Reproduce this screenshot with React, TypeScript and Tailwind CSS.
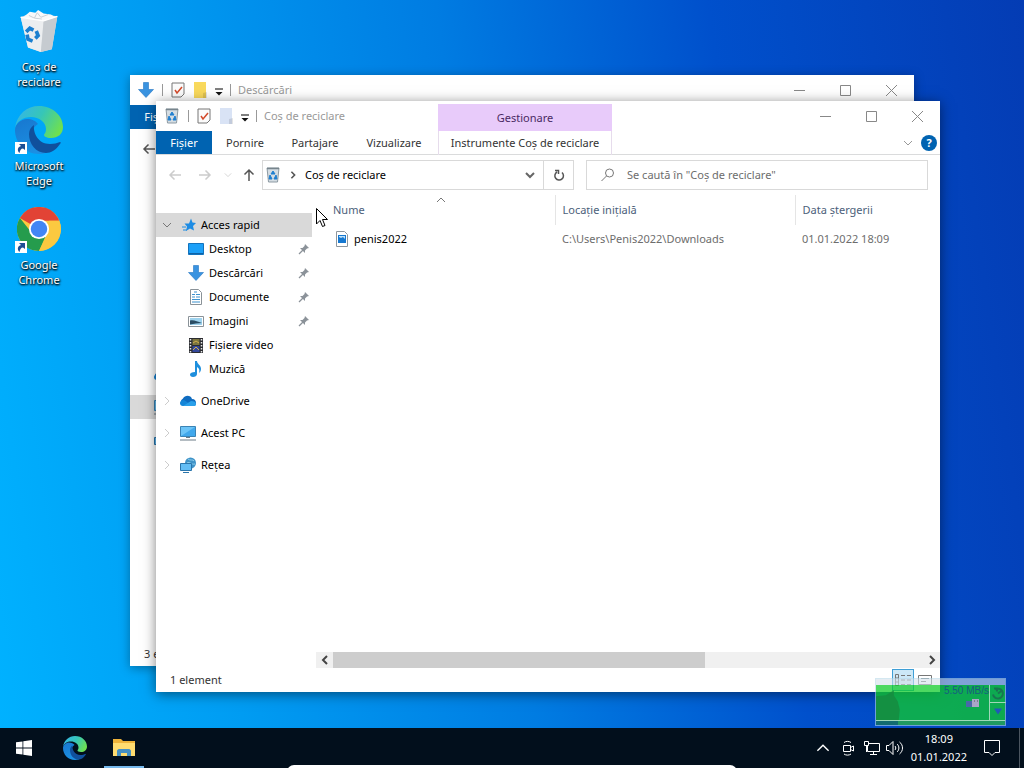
import React from "react";
import type { ReactNode } from "react";

interface IconProps {
    className?: string
}

const BinIcon = ({ className }: IconProps) => (
    <svg viewBox="0 0 16 16" className={className} aria-hidden="true">
        <path d="M2 1h12l-1.5 14h-9z" fill="#d5dde3" stroke="#8d9aa3" />
        <path d="M2 1.5h12" stroke="#77848c" strokeWidth="1.5" />
        <path d="M8 4l2 3H6zM5 8l2 4H4zM11 8l1 4H9z" fill="#1f7fd0" stroke="#1f7fd0" />
    </svg>
);

const DesktopBin = () => (
    <svg viewBox="0 0 48 48" className="h-11 w-11" aria-hidden="true">
        <path d="M4 9l12-5 12 2 16 2-6 36-12 3-14-5z" fill="#dfe3e7" />
        <path d="M4 9l25 4-3 34-14-5z" fill="#eceef0" />
        <path d="M29 13l15-5-6 36-12 3z" fill="#c6cbd0" />
        <path d="M7 9l7-6 6 1 3-3 6 4 8 1 5 3-13 4z" fill="#f8f9fa" />
        <path d="M13 7l6 3 3-6 4 5 8-3M19 10l8 1" fill="none" stroke="#c5ccd2" />
        <path d="M4 9l25 4 15-5" fill="none" stroke="#fff" strokeWidth="1.5" />
        <path d="M10 25l4-4 4 2M21 24l2 5-3 3M17 35l-5-2-1-5" fill="none" stroke="#1b7fcf" strokeWidth="4" />
    </svg>
);

const EdgeIcon = ({ className }: IconProps) => (
    <svg viewBox="0 0 48 48" className={className} aria-hidden="true">
        <defs>
            <linearGradient id="edgeTop" x1="0" y1="0.2" x2="1" y2="0.6">
                <stop offset="0" stopColor="#35b5e8" />
                <stop offset="0.5" stopColor="#36c6b8" />
                <stop offset="1" stopColor="#6fe04f" />
            </linearGradient>
            <linearGradient id="edgeLeft" x1="0" y1="0" x2="0.4" y2="1">
                <stop offset="0" stopColor="#1877cf" />
                <stop offset="1" stopColor="#1b8fe2" />
            </linearGradient>
        </defs>
        <path d="M0 24C0 37 10 48 24 48c5 0 10-2 13-4-12 1-20-6-20-16 0-5 3-8 6-10-2-3-6-5-11-5C6 13 0 18 0 24z" fill="url(#edgeLeft)" />
        <path d="M0 22C2 8 12 0 24 0c14 0 24 10 24 21 0 7-5 11-12 11-5 0-7-2-7-3 0-1 2-2 2-6 0-7-7-12-15-12C8 11 2 15 0 22z" fill="url(#edgeTop)" />
        <path d="M14 28c0-4 2-7 5-9-1 8 4 19 16 19 4 0 7-1 10-2 1 0 1 1 0 2-4 6-9 9-14 9-10 0-17-9-17-19z" fill="#10509c" />
    </svg>
);

const ChromeIcon = () => (
    <svg viewBox="0 0 48 48" className="h-11 w-11" aria-hidden="true">
        <circle cx="24" cy="24" r="24" fill="#fbc940" />
        <path d="M24 24L3.2 12A24 24 0 0 1 44.8 12L46 15H24z" fill="#e24335" />
        <path d="M3.2 12A24 24 0 0 0 24 48l9-18-9-6-8 4z" fill="#259c4d" />
        <path d="M24 48l8-18 3-15h11A24 24 0 0 1 24 48z" fill="#fbc940" />
        <circle cx="24" cy="24" r="11" fill="#fff" />
        <circle cx="24" cy="24" r="9" fill="#4286f5" />
    </svg>
);

const ShortcutArrow = () => (
    <svg viewBox="0 0 12 12" className="absolute bottom-0 left-0 h-3 w-3 bg-white" aria-hidden="true">
        <path d="M4 2h6v6L8 6.500c-2 0-3 2-3.500 4.500C1.500 8 3 5 6 4z" fill="#1d4e94" />
    </svg>
);

const CheckDoc = () => (
    <svg viewBox="0 0 14 16" className="h-4 w-3.5" aria-hidden="true">
        <path d="M1 1h12v11l-3 3H1z" fill="#fbfbfb" stroke="#777" />
        <path d="M4 8l2 3 5-6" fill="none" stroke="#d2492a" strokeWidth="1.5" />
    </svg>
);

const FolderPage = ({ className }: IconProps) => (
    <svg viewBox="0 0 14 16" className={className} aria-hidden="true">
        <path d="M1 0h12v16H1z" fill="currentColor" />
        <path d="M10 11l4-1v6h-4z" fill="#000" fillOpacity="0.1" />
    </svg>
);

const QuickMenu = () => (
    <svg viewBox="0 0 8 8" className="h-2 w-2" aria-hidden="true">
        <path d="M0 1h8" stroke="#000" />
        <path d="M0.500 4h7L4 7.500z" fill="#111" />
    </svg>
);

const DownArrow = () => (
    <svg viewBox="0 0 16 16" className="h-4 w-4" aria-hidden="true">
        <path d="M5.500 0.500h5v7h5L8 15.500 0.500 7.500h5z" fill="#3a93e0" stroke="#2376c2" strokeWidth="0.6" />
    </svg>
);

const StarIcon = () => (
    <svg viewBox="0 0 16 16" className="h-4 w-4" aria-hidden="true">
        <path d="M9 1.500l1.500 4L14 6l-3 3 1 4.500-4-2L4 14l1-4.500-2.500-3h4.500z" fill="#1d8ce4" />
        <path d="M0 10h4M1 13h4" stroke="#1d8ce4" />
    </svg>
);

const DesktopIcon = () => (
    <svg viewBox="0 0 16 16" className="h-4 w-4" aria-hidden="true">
        <path d="M0.500 2.500h15v11H0.500z" fill="#1ca0f8" stroke="#1373bd" />
        <path d="M1 12.500h14" stroke="#0e62a6" />
    </svg>
);

const DocumentIcon = () => (
    <svg viewBox="0 0 16 16" className="h-4 w-4" aria-hidden="true">
        <path d="M2.500 0.500h8l3 3v12h-11z" fill="#fff" stroke="#8a9298" />
        <path d="M4 5.500h3M4 8h3M4 10.500h8M4 13h8M8 5.500h4M8 8h4M6 3h3" stroke="#3d92cf" />
    </svg>
);

const PicturesIcon = () => (
    <svg viewBox="0 0 16 16" className="h-4 w-4" aria-hidden="true">
        <path d="M0.500 3.500h15v10H0.500z" fill="#fff" stroke="#8a9298" />
        <path d="M2 5h12v7H2z" fill="#9fd3ee" />
        <path d="M2 7.500c4-1 7 1 12 2.500l-6 0.500-6 1z" fill="#2a4c63" />
    </svg>
);

const VideoIcon = () => (
    <svg viewBox="0 0 16 16" className="h-4 w-4" aria-hidden="true">
        <path d="M1 1h14v15H1z" fill="#2b2c30" />
        <path d="M4.500 2h7v6h-7z" fill="#7a7440" />
        <path d="M4.500 9h7v6h-7z" fill="#34489c" />
        <path d="M5 6l3-2 3 2M5 13l3-3 3 3" fill="none" stroke="#d2b14a" />
        <path d="M2.500 2v14M13.500 2v14" stroke="#e8e8e8" strokeWidth="1.500" strokeDasharray="1.500 1.500" />
    </svg>
);

const MusicIcon = () => (
    <svg viewBox="0 0 16 16" className="h-4 w-4" aria-hidden="true">
        <path d="M7 0h2c0 3 4 4 4 8 0 2-1 3-2 4 1-3 0-5-2-6v7c0 2-2 3-4 3s-3-1-3-2.500S4 11 7 11z" fill="#1e8fdd" />
    </svg>
);

const CloudIcon = () => (
    <svg viewBox="0 0 16 12" className="h-3 w-4" aria-hidden="true">
        <path d="M4 11a4 4 0 0 1-1-7.500C5-0.500 11 0 12 4c3 0 4 2 4 4s-1 3-3 3z" fill="#0f6cc0" />
        <path d="M3 11c-2 0-3-1-3-3s2-3 4-3l9 6z" fill="#1485d8" />
        <path d="M3 11l8-5c3 0 5 1 5 3s-1 2-3 2z" fill="#2aa0ea" />
    </svg>
);

const PcIcon = () => (
    <svg viewBox="0 0 16 16" className="h-4 w-4" aria-hidden="true">
        <path d="M0.500 1.500h15v10H0.500z" fill="#6cc4f7" stroke="#3b83b4" />
        <path d="M1 11L15 2v9z" fill="#41a8ec" />
        <path d="M6 12.500h4M0 15h16" stroke="#6a7a86" />
    </svg>
);

const NetworkIcon = () => (
    <svg viewBox="0 0 16 16" className="h-4 w-4" aria-hidden="true">
        <circle cx="10.500" cy="6" r="5.500" fill="#3f93c8" />
        <path d="M8 2c2 2 5 0 6 2M7 6c3-2 4 2 8 1" fill="none" stroke="#8fd0ee" />
        <path d="M0.500 6.500h11v7h-11z" fill="#62bdf5" stroke="#2a75ab" />
        <path d="M3 15.500h6" stroke="#2a75ab" />
    </svg>
);

const PinIcon = () => (
    <svg viewBox="0 0 12 12" className="h-3 w-3" aria-hidden="true">
        <path d="M7 1l4 4-2 0.500-2 2 0 2.500L2 5l2.500 0 2-2z" fill="#8b9299" />
        <path d="M5 7l-4 4" stroke="#8b9299" strokeWidth="1.200" />
    </svg>
);

const ImageFile = () => (
    <svg viewBox="0 0 12 16" className="h-4 w-3" aria-hidden="true">
        <path d="M0.500 0.500h8l3 3v12H0.500z" fill="#fff" stroke="#8e979e" />
        <path d="M2 4h8v8H2z" fill="#1678d0" />
        <path d="M3 6l2 1 2-1 2 2v-3H3z" fill="#bfe2fa" />
    </svg>
);

interface ChevronProps {
    dir: "left" | "right" | "up" | "down",
    className?: string
}

const chevrons = {
    left: "M7 1L3 5l4 4",
    right: "M3 1l4 4-4 4",
    up: "M1 7l4-4 4 4",
    down: "M1 3l4 4 4-4",
};

const Chevron = ({ dir, className }: ChevronProps) => (
    <svg viewBox="0 0 10 10" className={className} fill="none" stroke="currentColor" aria-hidden="true">
        <path d={chevrons[dir]} />
    </svg>
);

interface ArrowProps {
    d: string,
    className: string
}

const NavArrow = ({ d, className }: ArrowProps) => (
    <svg viewBox="0 0 14 14" className={className} fill="none" stroke="currentColor" strokeWidth="1.500" aria-hidden="true">
        <path d={d} />
    </svg>
);

const arrowLeft = "M13 7H2M6.500 2.500L2 7l4.500 4.500";
const arrowRight = "M1 7h11M7.500 2.500L12 7l-4.500 4.500";
const arrowUp = "M7 13V2M2.500 6.500L7 2l4.500 4.500";

const CaptionButtons = () => {
    const shapes = [
        { label: "Minimizare", d: "M0 5.500h11" },
        { label: "Maximizare", d: "M0.500 0.500h10v10h-10z" },
        { label: "Închidere", d: "M0 0l11 11M11 0L0 11" },
    ];
    return <div className="ml-auto flex">
        {shapes.map((shape) => (
            <button key={shape.label} aria-label={shape.label} className="flex h-7 w-[46px] items-center justify-center">
                <svg viewBox="0 0 11 11" className="h-[11px] w-[11px]" fill="none" stroke="#888"><path d={shape.d} /></svg>
            </button>
        ))}
    </div>
};

interface TitleBarProps {
    icon: ReactNode,
    title: string,
    folderColor: string
}

const TitleBar = ({ icon, title, folderColor }: TitleBarProps) => (
    <div className="flex h-[30px] items-center">
        <div className="flex items-center pl-2">
            {icon}
            <span className="mx-2 h-3 w-px bg-[#999]" />
            <button aria-label="Proprietăți"><CheckDoc /></button>
            <button aria-label="Folder nou" className="ml-2"><FolderPage className={`h-4 w-3.5 ${folderColor}`} /></button>
            <button aria-label="Personalizare" className="ml-2 pt-1"><QuickMenu /></button>
            <span className="mx-[7px] h-3 w-px bg-[#999]" />
            <span className="text-[#999]">{title}</span>
        </div>
        <CaptionButtons />
    </div>
);

const DownloadsWindow = () => (
    <section className="absolute top-[75px] right-[110px] bottom-[102px] left-[130px] flex flex-col bg-white shadow-[0_2px_10px_rgba(0,0,0,0.35)]">
        <TitleBar icon={<DownArrow />} title="Descărcări" folderColor="text-[#f9d95c]" />
        <div className="flex h-6">
            <button className="w-14 bg-[#0063b1] text-white">Fișier</button>
        </div>
        <div className="flex h-10 items-center px-3 text-[#555]">
            <NavArrow d={arrowLeft} className="h-3.5 w-3.5" />
        </div>
        <div className="flex-1 pt-[194px] text-[#3c6f98]">
            <div className="flex h-6 items-center pl-6"><CloudIcon /></div>
            <div className="mt-2 flex h-6 items-center bg-[#d9d9d9] pl-6"><PcIcon /></div>
            <div className="mt-2 flex h-6 items-center pl-6"><NetworkIcon /></div>
        </div>
        <div className="flex h-6 items-center px-3.5 text-[#333]">3 elemente</div>
    </section>
);

const quickItems = [
    { name: "Desktop", icon: <DesktopIcon />, pinned: true },
    { name: "Descărcări", icon: <DownArrow />, pinned: true },
    { name: "Documente", icon: <DocumentIcon />, pinned: true },
    { name: "Imagini", icon: <PicturesIcon />, pinned: true },
    { name: "Fișiere video", icon: <VideoIcon />, pinned: false },
    { name: "Muzică", icon: <MusicIcon />, pinned: false },
];

const rootItems = [
    { name: "OneDrive", icon: <CloudIcon /> },
    { name: "Acest PC", icon: <PcIcon /> },
    { name: "Rețea", icon: <NetworkIcon /> },
];

const Sidebar = () => (
    <nav className="w-[156px] shrink-0 pt-[18px]">
        <div className="flex h-6 items-center bg-[#d9d9d9] pl-1.5">
            <Chevron dir="down" className="h-2.5 w-2.5 text-[#777]" />
            <span className="ml-2.5"><StarIcon /></span>
            <span className="ml-[3px]">Acces rapid</span>
        </div>
        <ul>
            {quickItems.map((item) => (
                <li key={item.name} className="flex h-6 items-center pr-0.5 pl-8">
                    {item.icon}
                    <span className="ml-[5px]">{item.name}</span>
                    {item.pinned && <span className="ml-auto"><PinIcon /></span>}
                </li>
            ))}
        </ul>
        <ul className="mt-2 flex flex-col gap-2">
            {rootItems.map((item) => (
                <li key={item.name} className="flex h-6 items-center pl-1.5">
                    <Chevron dir="right" className="h-2.5 w-2.5 text-[#ccc]" />
                    <span className="ml-2">{item.icon}</span>
                    <span className="ml-[5px]">{item.name}</span>
                </li>
            ))}
        </ul>
    </nav>
);

const FileTable = () => (
    <table className="w-full table-fixed text-left">
        <thead className="text-[#4c607a]">
            <tr className="h-[30px]">
                <th className="relative w-[231px] border-r border-[#e5e5e5] pl-[9px] font-normal">
                    Nume
                    <Chevron dir="up" className="absolute top-0 left-[112px] h-2.5 w-2.5 text-[#777]" />
                </th>
                <th className="w-60 border-r border-[#e5e5e5] pl-[7px] font-normal">Locație inițială</th>
                <th className="pl-[7px] font-normal">Data ștergerii</th>
            </tr>
        </thead>
        <tbody className="text-[#6d6d6d]">
            <tr className="h-7">
                <td className="pl-3 text-black"><span className="flex items-center gap-1.5"><ImageFile />penis2022</span></td>
                <td className="pl-[7px]">C:\Users\Penis2022\Downloads</td>
                <td className="pl-[7px]">01.01.2022 18:09</td>
            </tr>
        </tbody>
    </table>
);

const RecycleWindow = () => (
    <section className="absolute top-[101px] right-[84px] bottom-[76px] left-[156px] flex flex-col bg-white shadow-[0_2px_12px_rgba(0,0,0,0.5)]">
        <div className="relative">
            <TitleBar icon={<BinIcon className="h-4 w-4" />} title="Coș de reciclare" folderColor="text-[#d9e3f5]" />
            <div className="flex h-6 items-stretch border-b border-[#dadbdc] text-[#333]">
                <button className="w-14 bg-[#0063b1] text-white">Fișier</button>
                <button className="w-[66px]">Pornire</button>
                <button className="w-[74px]">Partajare</button>
                <button className="w-[84px]">Vizualizare</button>
                <span className="ml-auto flex items-center gap-2 pr-[3px]">
                    <button aria-label="Extindere panglică"><Chevron dir="down" className="h-2.5 w-2.5 text-[#999]" /></button>
                    <button aria-label="Ajutor" className="flex h-4 w-4 items-center justify-center rounded-full bg-[#0063b1] font-bold text-white">?</button>
                </span>
            </div>
            <div className="absolute top-[3px] left-[282px] w-[174px] text-center">
                <div className="h-[27px] bg-[#e8cbfa] pt-1.5 text-[#4a2a63]">Gestionare</div>
                <button className="block h-6 w-full border-x border-[#e6dcec] text-[#333]">Instrumente Coș de reciclare</button>
            </div>
        </div>
        <div className="flex h-10 items-center pr-3">
            <div className="flex w-[106px] items-center pl-3 text-[#ccc]">
                <button aria-label="Înapoi"><NavArrow d={arrowLeft} className="h-3.5 w-3.5" /></button>
                <button aria-label="Înainte" className="ml-4"><NavArrow d={arrowRight} className="h-3.5 w-3.5" /></button>
                <button aria-label="Locații recente" className="ml-3"><Chevron dir="down" className="h-2 w-2" /></button>
                <button aria-label="Sus" className="ml-2.5 text-[#555]"><NavArrow d={arrowUp} className="h-3.5 w-3.5" /></button>
            </div>
            <div className="flex h-[30px] min-w-0 flex-[310] border border-[#d9d9d9]">
                <div className="flex flex-1 items-center pr-2 pl-0.5">
                    <BinIcon className="h-4 w-4" />
                    <Chevron dir="right" className="mx-2 h-2 w-2 stroke-2 text-[#555]" />
                    <span>Coș de reciclare</span>
                    <button aria-label="Locații anterioare" className="ml-auto"><Chevron dir="down" className="h-2.5 w-2.5 stroke-2 text-[#666]" /></button>
                </div>
                <button aria-label="Reîmprospătare" className="flex w-[30px] items-center justify-center border-l border-[#d9d9d9]">
                    <svg viewBox="0 0 12 12" className="h-3 w-3" fill="none" stroke="#555" strokeWidth="1.500"><path d="M9 3.500a4.300 4.300 0 1 1-5-0.500M2 1.500h3.500V5" /></svg>
                </button>
            </div>
            <label className="ml-3 flex h-[30px] min-w-0 flex-[326] items-center border border-[#d9d9d9] pl-3.5">
                <svg viewBox="0 0 14 14" className="h-3.5 w-3.5" fill="none" stroke="#777" aria-hidden="true"><circle cx="8.500" cy="5" r="4" /><path d="M5.500 8L0.500 13" /></svg>
                <input type="text" aria-label="Căutare" placeholder={'Se caută în "Coș de reciclare"'} className="ml-3 min-w-0 flex-1 outline-none placeholder:text-[#6d6d6d]" />
            </label>
        </div>
        <div className="flex min-h-0 flex-1">
            <Sidebar />
            <div className="flex min-w-0 flex-1 flex-col pl-1">
                <div className="flex-1 pl-2"><FileTable /></div>
                <div className="flex h-4 items-center bg-[#f0f0f0] text-[#444]">
                    <button aria-label="Derulare la stânga" className="flex w-[17px] justify-center"><Chevron dir="left" className="h-2.5 w-2.5 stroke-2" /></button>
                    <div className="h-full flex-1"><div className="h-full w-[63%] bg-[#cdcdcd]" /></div>
                    <button aria-label="Derulare la dreapta" className="flex w-[17px] justify-center"><Chevron dir="right" className="h-2.5 w-2.5 stroke-2" /></button>
                </div>
            </div>
        </div>
        <div className="flex h-6 items-center pr-1 pl-3.5 text-[#333]">
            1 element
            <button aria-label="Detalii" className="ml-auto flex h-[22px] w-[22px] items-center justify-center border border-[#3f9fd6] bg-[#cce8f7]">
                <svg viewBox="0 0 16 12" className="h-3 w-4" stroke="#777" fill="none"><path d="M0.500 0.500h3v11h-3zM0 4h4M0 8h4M6 1.500h4M12 1.500h4M6 6h4M12 6h4M6 10.500h4M12 10.500h4" /></svg>
            </button>
            <button aria-label="Miniaturi" className="flex h-[22px] w-[22px] items-center justify-center">
                <svg viewBox="0 0 14 10" className="h-2.5 w-3.5" stroke="#777" fill="none"><path d="M0.500 0.500h13v9H0.500zM3 3.500h8M3 6.500h5" /></svg>
            </button>
        </div>
    </section>
);

interface ShortcutProps {
    name: string,
    linked?: boolean,
    children: ReactNode
}

const DesktopShortcut = ({ name, linked, children }: ShortcutProps) => (
    <button className="flex w-[78px] flex-col items-center">
        <span className="relative flex h-12 w-12 items-center justify-center">
            {children}
            {linked && <ShortcutArrow />}
        </span>
        <span className="mt-1 w-16 leading-[15px] text-white [text-shadow:0_1px_2px_#000,1px_1px_2px_#000]">{name}</span>
    </button>
);

const TransferMeter = () => (
    <div className="absolute right-[18px] bottom-[42px] flex h-12 w-[131px] flex-col border border-[#b7d8e8]/60">
        <div className="h-1.5 bg-[#d3dfea]/60" />
        <div className="flex flex-1 bg-[#12cc2c]/75">
            <svg viewBox="0 0 114 34" className="h-full flex-1" preserveAspectRatio="none" aria-hidden="true">
                <path d="M0 11L10 10 18 5v5l4 6 2 8-1 10H0z" fill="#168a3e" fillOpacity="0.8" />
            </svg>
            <span className="absolute top-1 right-4 font-['Liberation_Sans',sans-serif] text-[10px] text-[#175c80]">5.50 MB/s</span>
            <svg viewBox="0 0 16 12" className="absolute top-[18px] right-6 h-3 w-4" aria-hidden="true">
                <path d="M1 4h7v6H1z" fill="#4968a8" /><path d="M7 2h7v8H7z" fill="#a9a6c8" /><path d="M9 4h1M12 4h1" stroke="#555" />
            </svg>
            <div className="flex w-4 flex-col divide-y divide-[#9fd7b8] border-l border-[#9fd7b8]">
                <svg viewBox="0 0 16 16" className="min-h-0 w-4 flex-1" fill="none" stroke="#187650" strokeWidth="2" aria-hidden="true"><path d="M3 9a5 5 0 1 0 2-5M8 8l4-3M4 3h3v3" /></svg>
                <svg viewBox="0 0 16 16" className="min-h-0 w-4 flex-1" aria-hidden="true"><path d="M4 5h8l-4 6z" fill="#2158b8" /></svg>
            </div>
        </div>
        <div className="flex h-[5px] border-t border-[#9fd7b8] bg-[#209a60]"><div className="w-[17%] bg-[#126b70]" /></div>
    </div>
);

const Taskbar = () => (
    <footer className="absolute inset-x-0 bottom-0 flex h-10 overflow-hidden bg-[#020f1c] text-white">
        <button aria-label="Start" className="flex w-12 items-center justify-center">
            <svg viewBox="0 0 16 16" className="h-4 w-4" fill="#fff"><path d="M0 2.300L6.500 1.400v6.200H0zM7.300 1.300L16 0v7.600H7.300zM0 8.400h6.500v6.200L0 13.700zM7.300 8.400H16V16l-8.700-1.300z" /></svg>
        </button>
        <button aria-label="Microsoft Edge" className="ml-[3px] flex w-12 items-center justify-center"><EdgeIcon className="h-6 w-6" /></button>
        <button aria-label="Explorer" className="ml-[5px] flex w-10 items-center justify-center border-b-2 border-[#76b9ed]">
            <svg viewBox="0 0 22 20" className="mt-0.5 h-5 w-[22px]">
                <path d="M0 1h8l2 2h12v15H0z" fill="#eeb33a" />
                <path d="M0 5h22v13H0z" fill="#ffdc70" />
                <path d="M4 18v-5c0-1 1-2 2-2h10c1 0 2 1 2 2v5h-4v-3H8v3z" fill="#4590c4" />
            </svg>
        </button>
        <div className="ml-auto flex items-center">
            <button aria-label="Pictograme ascunse"><Chevron dir="up" className="h-3.5 w-3.5" /></button>
            <svg viewBox="0 0 16 16" className="ml-2.5 h-4 w-4" fill="none" stroke="#fff" aria-hidden="true">
                <path d="M3.500 5.500h7v6h-7zM10.500 7.500l3-1.500v5l-3-1.500M4 2.500c2-1.500 5-1.500 7 0M4 14c2 1.500 5 1.500 7 0" />
            </svg>
            <svg viewBox="0 0 16 16" className="ml-2 h-4 w-4" fill="none" stroke="#fff" aria-hidden="true">
                <path d="M5 3.500h10.500v8H3.500V6M9.500 12v2.500M6 14.500h7M0.500 1.500h4v4h-4zM2.500 6v6" />
            </svg>
            <svg viewBox="0 0 17 16" className="ml-1.5 h-4 w-[17px]" fill="none" stroke="#fff" aria-hidden="true">
                <path d="M0.500 5.500h2.500l4-4v13l-4-4H0.500zM9 6c1 1 1 3 0 4M11 4c2.500 2 2.500 6 0 8M13.500 2c4 3 4 9 0 12" />
            </svg>
            <div className="ml-2 text-center leading-[18px]">
                <div>18:09</div>
                <div>01.01.2022</div>
            </div>
            <button aria-label="Notificări" className="mr-[18px] ml-4">
                <svg viewBox="0 0 18 18" className="h-[18px] w-[18px]" fill="none" stroke="#fff"><path d="M1.500 1.500h15v12H12l-3 3-3-3H1.500z" /></svg>
            </button>
            <span className="mr-1 h-full w-px bg-[#4b5560]" />
        </div>
        <div className="absolute -bottom-1 left-[28%] h-[7px] w-[44%] rounded-t-lg bg-white" />
    </footer>
);

export default function App() {
    return <main className="relative h-screen overflow-hidden bg-[linear-gradient(82deg,#00b2ff_0%,#009cf2_22%,#007ce2_48%,#0050cc_72%,#043cb4_100%)] font-['Noto_Sans','Open_Sans',sans-serif] text-[11px] leading-4 text-black">
        <div className="flex flex-col gap-[17px] pt-[7px]">
            <DesktopShortcut name="Coș de reciclare"><DesktopBin /></DesktopShortcut>
            <DesktopShortcut name="Microsoft Edge" linked><EdgeIcon className="h-12 w-12" /></DesktopShortcut>
            <DesktopShortcut name="Google Chrome" linked><ChromeIcon /></DesktopShortcut>
        </div>
        <DownloadsWindow />
        <RecycleWindow />
        <TransferMeter />
        <Taskbar />
        <svg viewBox="0 0 12 20" className="absolute top-[208px] left-[316px] h-5 w-3" aria-hidden="true">
            <path d="M0.500 0.500v15.500l3.500-3.500 2.500 6 2.500-1-2.500-6h5z" fill="#fff" stroke="#000" />
        </svg>
    </main>
}
